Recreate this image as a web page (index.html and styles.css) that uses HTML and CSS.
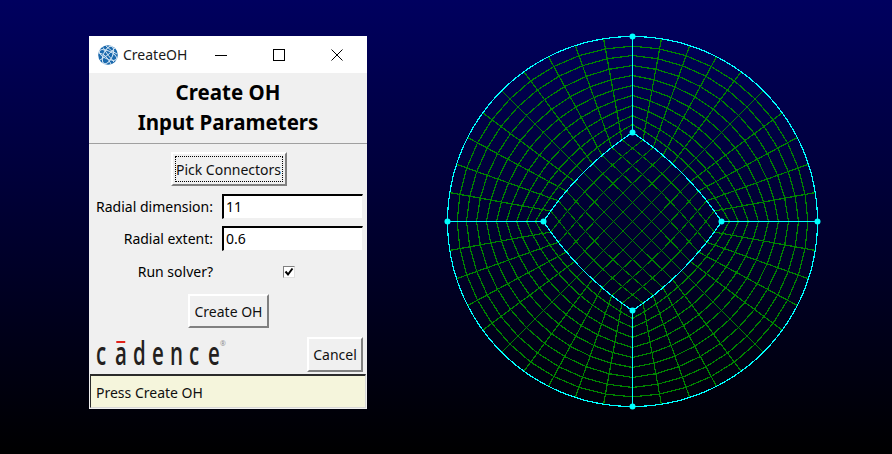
FILE: index.html
```html
<!DOCTYPE html>
<html lang="en">

<head>
    <meta charset="UTF-8">
    <title>CreateOH</title>
    <link rel="stylesheet" href="styles.css">
</head>

<body>
    <div class="window">
        <div class="titlebar">
            <svg class="app-icon" width="20" height="20" viewBox="0 0 20 20">
                <circle cx="10" cy="10" r="9.8" fill="#1a69ad" />
                <g fill="none" stroke="#d5e6f4" stroke-width="1">
                    <ellipse cx="10" cy="10" rx="4.5" ry="9.4" transform="rotate(25 10 10)" />
                    <ellipse cx="10" cy="10" rx="9.4" ry="4" transform="rotate(25 10 10)" />
                    <path d="M2 15 Q10 11 17 3" />
                    <path d="M5 2.5 Q10 11 16 17" />
                    <path d="M1 8 Q8 9 13 19" />
                    <path d="M8 1 Q13 6 19 9" />
                </g>
            </svg>
            <span class="title-text">CreateOH</span>
            <div class="controls">
                <svg width="58" height="12" viewBox="0 0 12 12" class="ctl"><path d="M0 6.5H12" /></svg>
                <svg width="58" height="12" viewBox="0 0 12 12" class="ctl"><rect x=".5" y=".5" width="11" height="11" /></svg>
                <svg width="58" height="12" viewBox="0 0 12 12" class="ctl"><path d="M.5 .5L11.5 11.5M11.5 .5L.5 11.5" /></svg>
            </div>
        </div>

        <div class="content">
            <h1 class="heading">Create OH<br>Input Parameters</h1>
            <div class="sep"></div>

            <div class="center pick-row"><div class="btn focused">Pick Connectors</div></div>

            <div class="form">
                <div class="label">Radial dimension:</div>
                <div class="entry">11</div>
                <div class="label">Radial extent:</div>
                <div class="entry">0.6</div>
                <div class="label solver-label">Run solver?</div>
                <div class="solver-cell">
                    <div class="check">
                        <svg width="10" height="10" viewBox="0 0 10 10"><path d="M1.5 4.5L4 7.5L8.5 1.5" /></svg>
                    </div>
                </div>
            </div>

            <div class="center create-row"><div class="btn">Create OH</div></div>

            <div class="bottom-row">
                <div class="logo">
                    <span>c</span><span class="logo-a">a</span><span>d</span><span>e</span><span>n</span><span>c</span><span>e</span><span class="reg">®</span>
                </div>
                <div class="btn cancel">Cancel</div>
            </div>
        </div>

        <div class="status">Press Create OH</div>
    </div>

    <svg id="mesh" class="mesh" width="392" height="392" viewBox="-196.5 -196.5 392 392"></svg>

    <script src="script.js"></script>
</body>

</html>
```

FILE: styles.css
```css
* {
    margin: 0;
    padding: 0;
    box-sizing: border-box;
}
html,
body {
    height: 100%;
}
body {
    display: flex;
    align-items: flex-start;
    overflow: hidden;
    padding: 25px 0 0 89px;
    background: linear-gradient(#00005f, #000000);
    font-family: "Noto Sans", sans-serif;
    font-size: 14px;
    color: #000;
}
.window {
    width: 278px;
    height: 373px;
    margin-top: 11px;
    display: flex;
    flex-direction: column;
    background: #f0f0f0;
}
.titlebar {
    height: 37px;
    flex: none;
    display: flex;
    align-items: center;
    padding-left: 9px;
    background: #fff;
}
.title-text {
    margin-left: 5px;
    color: #1a1a1a;
}
.controls {
    margin-left: auto;
    display: flex;
    margin-right: 1px;
}
.ctl {
    display: block;
    fill: none;
    stroke: #000;
    stroke-width: 1;
}
.content {
    flex: 1;
    display: flex;
    flex-direction: column;
}
.heading {
    font-size: 20.5px;
    font-weight: 700;
    line-height: 30px;
    text-align: center;
    padding-top: 4px;
}
.sep {
    height: 1px;
    margin-top: 6px;
    background: #a0a0a0;
}
.center {
    display: flex;
    justify-content: center;
}
.pick-row {
    margin-top: 8px;
    padding-left: 1px;
}
.btn {
    height: 34px;
    display: flex;
    align-items: center;
    justify-content: center;
    white-space: nowrap;
    border: 2px solid;
    border-color: #fff #808080 #808080 #fff;
    background: #f0f0f0;
    color: #101010;
}
.focused {
    width: 116px;
    outline: 1px dotted #000;
    outline-offset: -5px;
}
.form {
    display: grid;
    grid-template-columns: 124px 141px;
    column-gap: 9px;
    margin-top: 8px;
}
.label {
    display: flex;
    align-items: center;
    justify-content: flex-end;
    height: 25px;
    white-space: nowrap;
}
.entry {
    height: 25px;
    margin-bottom: 7px;
    padding-left: 2px;
    line-height: 22px;
    background: #fff;
    border-style: solid;
    border-width: 2px 1px 1px 2px;
    border-color: #000 #f0f0f0 #f0f0f0 #000;
}
.solver-label {
    margin-top: 1px;
}
.solver-cell {
    display: flex;
    align-items: center;
    padding-left: 61px;
    height: 25px;
    margin-top: 1px;
}
.check {
    width: 12px;
    height: 12px;
    display: flex;
    align-items: center;
    justify-content: center;
    background: #fff;
    border: 1px solid;
    border-color: #808080 #e0e0e0 #e0e0e0 #808080;
}
.check svg {
    display: block;
    flex: none;
    fill: none;
    stroke: #000;
    stroke-width: 2;
}
.create-row {
    margin-top: 10px;
    padding-left: 1px;
}
.create-row .btn {
    width: 81px;
}
.bottom-row {
    display: flex;
    align-items: flex-end;
    justify-content: space-between;
    margin-top: 8px;
    padding: 0 4px 0 7px;
}
.cancel {
    width: 56px;
    height: 35px;
}
.logo {
    position: relative;
    display: flex;
    height: 34px;
    margin-bottom: 2px;
    font-family: "Open Sans", sans-serif;
    font-size: 32px;
    font-weight: 600;
    line-height: 34px;
    color: #231f20;
}
.logo span {
    display: block;
    width: 18.6px;
    transform: scaleX(0.64);
    transform-origin: left center;
}
.logo-a {
    position: relative;
}
.logo .logo-a::before {
    content: "";
    position: absolute;
    top: 5px;
    left: 2px;
    width: 14px;
    height: 2px;
    background: #e2231a;
}
.logo .reg {
    position: absolute;
    top: 3px;
    left: 124px;
    width: auto;
    font-size: 7px;
    font-weight: 400;
    line-height: 10px;
    color: #888;
    transform: none;
}
.status {
    flex: none;
    height: 34px;
    margin: 0 1px 1px;
    padding-left: 5px;
    line-height: 33px;
    background: #f5f5dc;
    border-style: solid;
    border-width: 2px 1px 1px 1px;
    border-color: #2b2b2b #d8d8d8 #d8d8d8 #2b2b2b;
    color: #101010;
}
.mesh {
    display: block;
    flex: none;
    margin-left: 69px;
}
.mesh .grid {
    fill: none;
    stroke: #008400;
    stroke-width: 1.2;
    shape-rendering: crispEdges;
}
.mesh .core {
    fill: none;
    stroke: #008000;
    stroke-width: 1;
    shape-rendering: crispEdges;
}
.mesh .conn {
    fill: none;
    stroke: #00ffff;
    stroke-width: 1.2;
    shape-rendering: crispEdges;
}
.mesh .node {
    fill: #00ffff;
}
```

FILE: script.js
```js
// O-H mesh: 10x10 centre block with four 10 cell outer blocks
var R = 185;
var INNER = 89;
var CTRL = 53.5;
var N = 10;
var RINGS = [0, 0.083, 0.177, 0.281, 0.385, 0.49, 0.594, 0.698, 0.802, 0.9, 1];
var NS = 'http://www.w3.org/2000/svg';
var svg = document.getElementById('mesh');

// one side of the centre diamond, quarter q, t from 0 to 1
function side(q, t) {
    var a = q * Math.PI / 2;
    var x = 2 * t * (1 - t) * CTRL + t * t * INNER;
    var y = (1 - t) * (1 - t) * -INNER + 2 * t * (1 - t) * -CTRL;
    return [x * Math.cos(a) - y * Math.sin(a), x * Math.sin(a) + y * Math.cos(a)];
}

function outer(q, t) {
    var a = (q + t) * Math.PI / 2;
    return [R * Math.sin(a), -R * Math.cos(a)];
}

function add(points, cls) {
    var p = document.createElementNS(NS, 'polyline');
    p.setAttribute('points', points.map(function (c) {
        return c[0].toFixed(1) + ',' + c[1].toFixed(1);
    }).join(' '));
    p.setAttribute('class', cls);
    svg.appendChild(p);
}

function spoke(q, i, t) {
    var a = side(q, i / N);
    var b = outer(q, i / N);
    return [a[0] + (b[0] - a[0]) * t, a[1] + (b[1] - a[1]) * t];
}

// outer blocks
for (var q = 0; q < 4; q++) {
    for (var i = 1; i < N; i++) {
        add([spoke(q, i, 0), spoke(q, i, 1)], 'grid');
    }
    for (var j = 1; j < N; j++) {
        var ring = [];
        for (var k = 0; k <= N; k++) {
            ring.push(spoke(q, k, RINGS[j]));
        }
        add(ring, 'grid');
    }
}

// centre block: boundary from the sides, inside relaxed with laplace passes
var g = [];
for (var u = 0; u <= N; u++) {
    g[u] = [];
    for (var v = 0; v <= N; v++) {
        g[u][v] = [(u - v) * INNER / N, (u + v - N) * INNER / N];
    }
}
for (var e = 0; e <= N; e++) {
    g[e][0] = side(0, e / N);
    g[N][e] = side(1, e / N);
    g[N - e][N] = side(2, e / N);
    g[0][N - e] = side(3, e / N);
}
for (var pass = 0; pass < 300; pass++) {
    for (var a = 1; a < N; a++) {
        for (var b = 1; b < N; b++) {
            g[a][b] = [0, 1].map(function (n) {
                return (g[a - 1][b][n] + g[a + 1][b][n] + g[a][b - 1][n] + g[a][b + 1][n]) / 4;
            });
        }
    }
}
for (var c = 1; c < N; c++) {
    var l1 = [], l2 = [];
    for (var d = 0; d <= N; d++) {
        l1.push(g[c][d]);
        l2.push(g[d][c]);
    }
    add(l1, 'core');
    add(l2, 'core');
}

// connectors on top
for (var s = 0; s < 4; s++) {
    var arc = [], inner = [];
    for (var m = 0; m <= 40; m++) {
        arc.push(outer(s, m / 40));
        inner.push(side(s, m / 40));
    }
    add(arc, 'conn');
    add(inner, 'conn');
    add([spoke(s, 0, 0), spoke(s, 0, 1)], 'conn');
    [0, 1].forEach(function (t) {
        var pt = spoke(s, 0, t);
        var dot = document.createElementNS(NS, 'circle');
        dot.setAttribute('cx', pt[0]);
        dot.setAttribute('cy', pt[1]);
        dot.setAttribute('r', 3);
        dot.setAttribute('class', 'node');
        svg.appendChild(dot);
    });
}
```
